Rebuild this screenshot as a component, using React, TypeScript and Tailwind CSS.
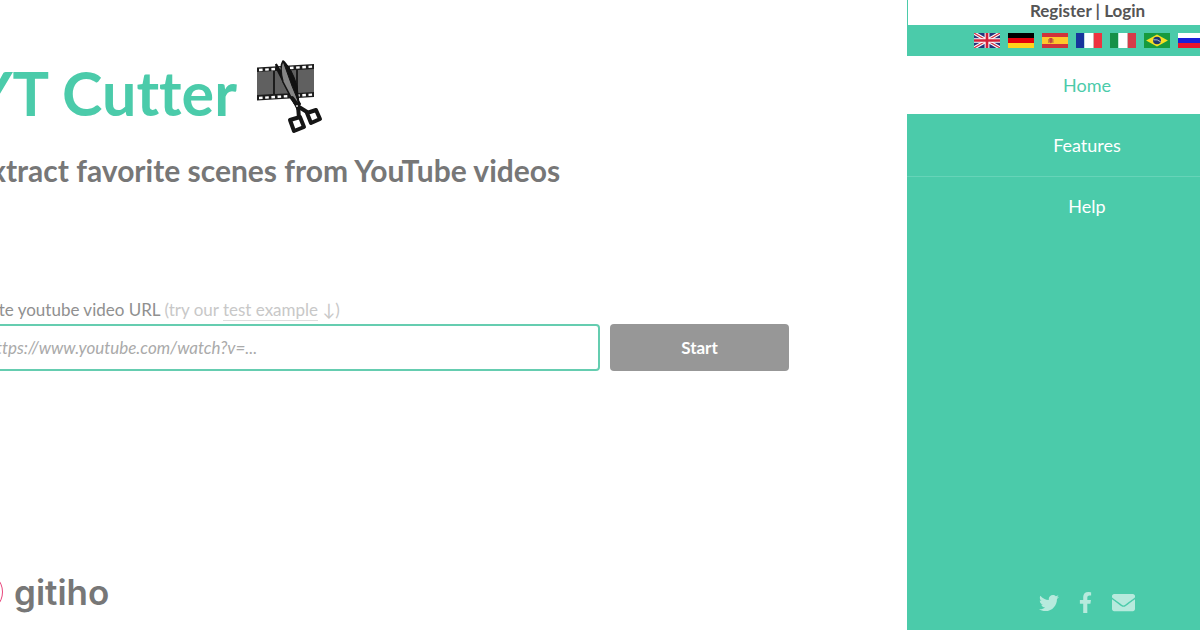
import type { ReactNode } from "react";
import { FaEnvelope, FaFacebookF, FaTwitter } from "react-icons/fa";

const flags: { label: string; art: ReactNode }[] = [
  {
    label: "English",
    art: (
      <>
        <rect width="25" height="15" fill="#27347c" />
        <path d="M0 0L25 15M25 0L0 15" stroke="#fff" strokeWidth="3.4" />
        <path d="M0 0L25 15M25 0L0 15" stroke="#d03345" strokeWidth="1.2" />
        <path d="M12.5 0V15M0 7.5H25" stroke="#fff" strokeWidth="4.6" />
        <path d="M12.5 0V15M0 7.5H25" stroke="#d22038" strokeWidth="2.6" />
      </>
    ),
  },
  {
    label: "Deutsch",
    art: (
      <>
        <rect width="25" height="5" fill="#000" />
        <rect y="5" width="25" height="5" fill="#e3000b" />
        <rect y="10" width="25" height="5" fill="#ffd21c" />
      </>
    ),
  },
  {
    label: "Español",
    art: (
      <>
        <rect width="25" height="15" fill="#d0343a" />
        <rect y="4" width="25" height="7" fill="#ffc72c" />
        <path d="M6 6h1v4H6zM10 6h1v4h-1z" fill="#b5713f" />
        <path d="M7 5h3v4l-1.500 1.500L7 9z" fill="#c4473d" />
      </>
    ),
  },
  {
    label: "Français",
    art: (
      <>
        <rect width="8" height="15" fill="#17359c" />
        <rect x="8" width="9" height="15" fill="#fff" />
        <rect x="17" width="8" height="15" fill="#ed3340" />
      </>
    ),
  },
  {
    label: "Italiano",
    art: (
      <>
        <rect width="8" height="15" fill="#169148" />
        <rect x="8" width="9" height="15" fill="#fff" />
        <rect x="17" width="8" height="15" fill="#d63b48" />
      </>
    ),
  },
  {
    label: "Português",
    art: (
      <>
        <rect width="25" height="15" fill="#169b3e" />
        <path d="M12.500 1.500L23 7.500L12.500 13.500L2 7.500z" fill="#f5df24" />
        <circle cx="12.500" cy="7.500" r="3.800" fill="#20356f" />
        <path d="M9 6.800q4-.8 7 2" fill="none" stroke="#c9dbe2" strokeWidth="0.8" />
      </>
    ),
  },
  {
    label: "Русский",
    art: (
      <>
        <rect width="25" height="5" fill="#fff" />
        <rect y="5" width="25" height="5" fill="#1a21d8" />
        <rect y="10" width="25" height="5" fill="#e9152c" />
      </>
    ),
  },
];

const socials = [
  { label: "Twitter", icon: <FaTwitter size={20} /> },
  { label: "Facebook", icon: <FaFacebookF size={21} /> },
  { label: "Email", icon: <FaEnvelope size={23} /> },
];

const FilmLogo = () => (
  <svg viewBox="0 0 80 85" className="h-[85px] w-[80px] shrink-0" aria-hidden="true">
    <path d="M8 12.500L65 9V42L8 45.500z" fill="#1c1c1c" />
    <path d="M8 17L24 16V39L8 40z" fill="#606060" />
    <path d="M26 16L47 15V38L26 39z" fill="#606060" />
    <path d="M49 15L65 14V37L49 38z" fill="#606060" />
    <path d="M10 15L65 11.500M10 43L65 39.500" stroke="#fff" strokeWidth="2.400" strokeDasharray="3.600 2.600" />
    <path d="M27 9L28 14L48 53L51 49z" fill="#111" stroke="#111" strokeWidth="2" />
    <path d="M34 6Q39 9 46 29L50 51L45 48L34 27Q30 12 34 6z" fill="#858585" stroke="#161616" strokeWidth="1.600" strokeLinejoin="round" />
    <path d="M34 6Q43 13 48 31L50 48L43 31z" fill="#111" stroke="#111" strokeWidth="1" />
    <path d="M43 43L50 52L58 57M49 51L50 63" fill="none" stroke="#151515" strokeWidth="4" strokeLinecap="round" />
    <circle cx="48" cy="51" r="1" fill="#ddd" />
    <path d="M41 65L51 62L55 72L45 76z" fill="#fff" stroke="#151515" strokeWidth="4" strokeLinejoin="round" />
    <path d="M58 58L67 55L71 64L62 68z" fill="#fff" stroke="#151515" strokeWidth="4" strokeLinejoin="round" />
  </svg>
);

const Sidebar = () => (
  <aside className="-mr-[67px] flex w-[360px] shrink-0 flex-col bg-[#4bcbaa] text-center">
    <div className="ml-px h-[25px] bg-white text-[17px] leading-[21px] font-bold text-[#555]">
      <a href="#register">Register</a> | <a href="#login">Login</a>
    </div>
    <div className="flex h-[31px] items-center gap-2 pl-[67px]">
      {flags.map((flag) => (
        <a key={flag.label} href="#language" aria-label={flag.label} className="shrink-0">
          <svg viewBox="0 0 25 15" className="block h-[15px] w-[26px]" preserveAspectRatio="none">
            {flag.art}
          </svg>
        </a>
      ))}
    </div>
    <nav className="flex flex-col text-lg text-white">
      <a href="#home" className="bg-white py-4 leading-[26px] text-[#4bcbaa]">
        Home
      </a>
      <a href="#features" className="border-b border-[#66d4b8] py-[18px] leading-[26px]">
        Features
      </a>
      <a href="#help" className="py-4 leading-[26px]">
        Help
      </a>
    </nav>
    <div className="mt-auto flex items-center justify-center gap-4 pb-4 text-[#b7eadd]">
      {socials.map((social) => (
        <a key={social.label} href="#social" aria-label={social.label}>
          {social.icon}
        </a>
      ))}
    </div>
  </aside>
);

const App = () => {
  return (
    <div className="flex min-h-screen overflow-hidden bg-white font-['Lato',sans-serif] [font-variant-ligatures:none]">
      <main className="-ml-[27px] flex min-w-0 flex-1 flex-col pr-[118px]">
        <header className="pt-[55px]">
          <div className="flex items-start gap-3">
            <h1 className="text-[61px] leading-[76px] font-bold whitespace-nowrap text-[#4bcbaa]">YT Cutter</h1>
            <FilmLogo />
          </div>
          <h2 className="mt-[11px] text-[30px] leading-[38px] font-bold whitespace-nowrap text-[#777]">
            Extract favorite scenes from YouTube videos
          </h2>
        </header>

        <form className="mt-[108px]" onSubmit={(e) => e.preventDefault()}>
          <div className="text-[17px] leading-[26px] whitespace-nowrap text-[#c8c8c8]">
            <label htmlFor="video-url" className="text-[#909090]">
              Paste youtube video URL
            </label>{" "}
            (try our{" "}
            <a href="#example" className="border-b border-[#ddd]">
              test example
            </a>{" "}
            ↓)
          </div>
          <div className="mt-px flex gap-[10px]">
            <input
              id="video-url"
              type="text"
              placeholder="https://www.youtube.com/watch?v=..."
              className="h-[47px] min-w-0 flex-1 rounded border-2 border-[#65cdb0] px-3 text-[17px] outline-none placeholder:text-[#aaa] placeholder:italic"
            />
            <button type="submit" className="h-[47px] w-[179px] rounded bg-[#979797] text-[17px] font-bold text-white">
              Start
            </button>
          </div>
        </form>

        <footer className="-ml-3 mt-auto flex items-center gap-[11px] pb-[17px]">
          <span className="h-[42px] w-[42px] shrink-0 rounded-full border border-[#e8457c]" />
          <span className="font-['Inter',sans-serif] text-[35px] leading-[40px] font-semibold text-[#777]">gitiho</span>
        </footer>
      </main>
      <Sidebar />
    </div>
  );
};

export default App;
